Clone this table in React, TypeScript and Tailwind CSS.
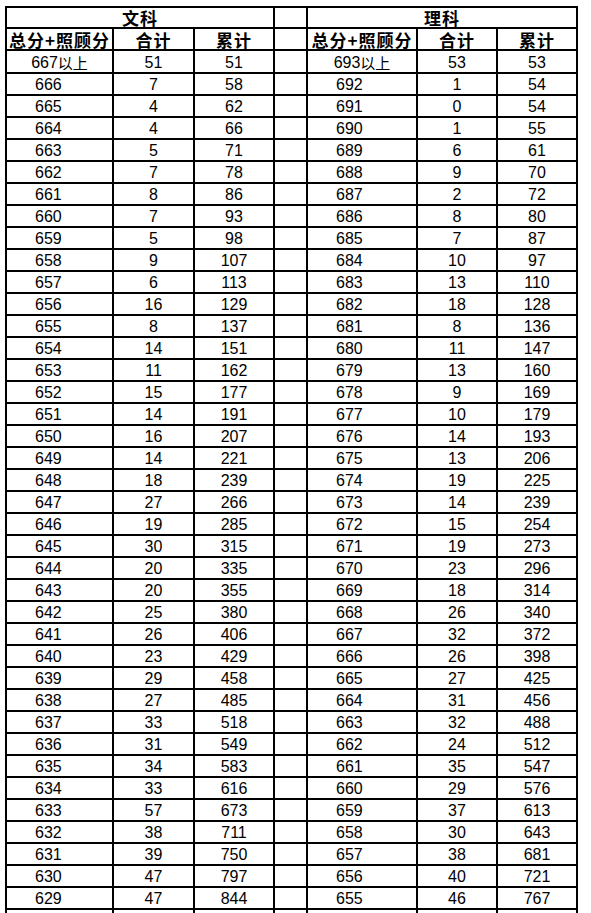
import React from "react";

type Row = [string, number, number];

const wenke: Row[] = [
  ["667以上", 51, 51],
  ["666", 7, 58],
  ["665", 4, 62],
  ["664", 4, 66],
  ["663", 5, 71],
  ["662", 7, 78],
  ["661", 8, 86],
  ["660", 7, 93],
  ["659", 5, 98],
  ["658", 9, 107],
  ["657", 6, 113],
  ["656", 16, 129],
  ["655", 8, 137],
  ["654", 14, 151],
  ["653", 11, 162],
  ["652", 15, 177],
  ["651", 14, 191],
  ["650", 16, 207],
  ["649", 14, 221],
  ["648", 18, 239],
  ["647", 27, 266],
  ["646", 19, 285],
  ["645", 30, 315],
  ["644", 20, 335],
  ["643", 20, 355],
  ["642", 25, 380],
  ["641", 26, 406],
  ["640", 23, 429],
  ["639", 29, 458],
  ["638", 27, 485],
  ["637", 33, 518],
  ["636", 31, 549],
  ["635", 34, 583],
  ["634", 33, 616],
  ["633", 57, 673],
  ["632", 38, 711],
  ["631", 39, 750],
  ["630", 47, 797],
  ["629", 47, 844],
];

const like: Row[] = [
  ["693以上", 53, 53],
  ["692", 1, 54],
  ["691", 0, 54],
  ["690", 1, 55],
  ["689", 6, 61],
  ["688", 9, 70],
  ["687", 2, 72],
  ["686", 8, 80],
  ["685", 7, 87],
  ["684", 10, 97],
  ["683", 13, 110],
  ["682", 18, 128],
  ["681", 8, 136],
  ["680", 11, 147],
  ["679", 13, 160],
  ["678", 9, 169],
  ["677", 10, 179],
  ["676", 14, 193],
  ["675", 13, 206],
  ["674", 19, 225],
  ["673", 14, 239],
  ["672", 15, 254],
  ["671", 19, 273],
  ["670", 23, 296],
  ["669", 18, 314],
  ["668", 26, 340],
  ["667", 32, 372],
  ["666", 26, 398],
  ["665", 27, 425],
  ["664", 31, 456],
  ["663", 32, 488],
  ["662", 24, 512],
  ["661", 35, 547],
  ["660", 29, 576],
  ["659", 37, 613],
  ["658", 30, 643],
  ["657", 38, 681],
  ["656", 40, 721],
  ["655", 46, 767],
];

const cell = "border-r-2 border-b-2 border-black flex items-center justify-center";
const num = `${cell} pt-[2px]`;
const head =
  "font-['Noto_Sans_CJK_SC',sans-serif] font-bold text-[17px] leading-none tracking-[1px]";

function ScoreCell({ score }: { score: string }) {
  if (score.includes("以上")) {
    return (
      <div className={num}>
        {score.slice(0, 3)}
        <span className="font-['Noto_Sans_CJK_SC',sans-serif] text-[15px]">以上</span>
      </div>
    );
  }
  return <div className={`${num} !justify-start pl-[28px]`}>{score}</div>;
}

export default function App() {
  return (
    <div className="h-[913px] overflow-hidden bg-white pt-[6px] pl-[5px]">
      <div className="grid w-[573px] grid-cols-[107px_81px_80px_33px_110px_80px_80px] grid-rows-[21px_22px_23px] auto-rows-[22px] border-l-2 border-t-2 border-black font-['Liberation_Sans',Arial,'Noto_Sans_CJK_SC',sans-serif] text-[16px] leading-none text-black">
        {/* section titles */}
        <div className={`${cell} ${head} col-span-3`}>文科</div>
        <div className={cell} />
        <div className={`${cell} ${head} col-span-3`}>理科</div>

        {/* column titles */}
        {[0, 1].map((side) => (
          <React.Fragment key={side}>
            {side === 1 && <div className={cell} />}
            <div className={`${cell} ${head}`}>总分+照顾分</div>
            <div className={`${cell} ${head}`}>合计</div>
            <div className={`${cell} ${head}`}>累计</div>
          </React.Fragment>
        ))}

        {wenke.map((w, i) => {
          const l = like[i];
          return (
            <React.Fragment key={w[0]}>
              <ScoreCell score={w[0]} />
              <div className={num}>{w[1]}</div>
              <div className={num}>{w[2]}</div>
              <div className={cell} />
              <ScoreCell score={l[0]} />
              <div className={num}>{l[1]}</div>
              <div className={num}>{l[2]}</div>
            </React.Fragment>
          );
        })}

        {/* next row, cut off by the window */}
        {Array.from({ length: 7 }).map((_, i) => (
          <div key={i} className={cell} />
        ))}
      </div>
    </div>
  );
}
